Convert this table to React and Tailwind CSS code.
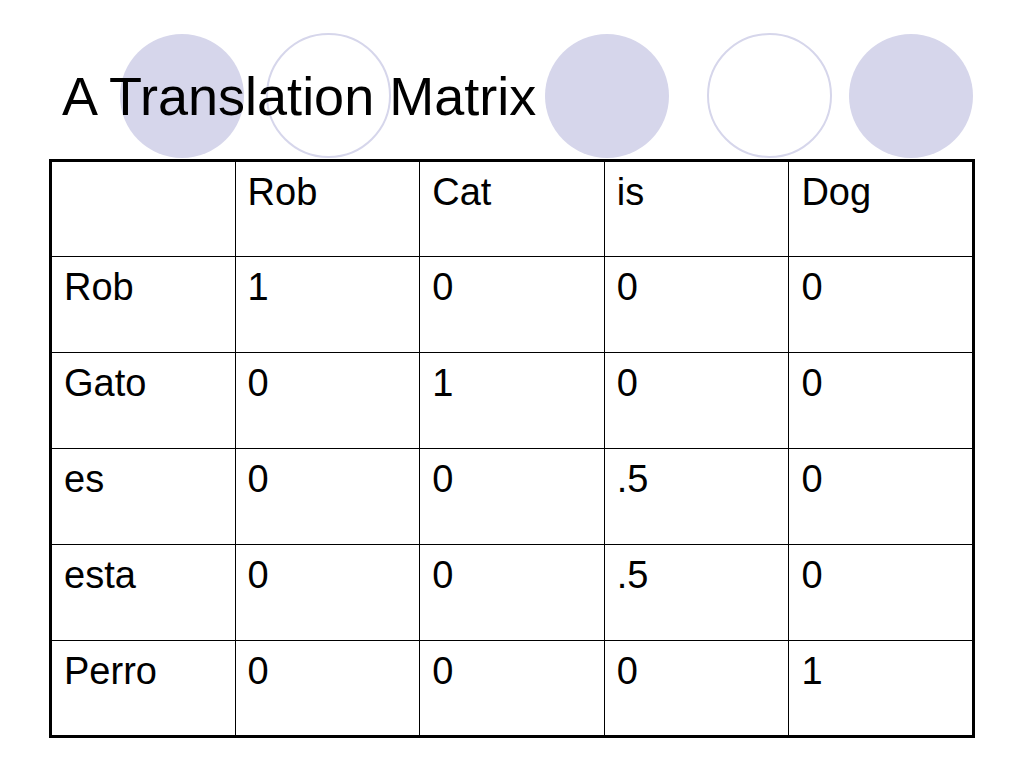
import React from "react";

const header = ["", "Rob", "Cat", "is", "Dog"];
const rows = [
  ["Rob", "1", "0", "0", "0"],
  ["Gato", "0", "1", "0", "0"],
  ["es", "0", "0", ".5", "0"],
  ["esta", "0", "0", ".5", "0"],
  ["Perro", "0", "0", "0", "1"],
];

function Filled({ className = "" }) {
  return <div className={"shrink-0 w-[124px] h-[124px] rounded-full bg-[#d6d6eb] " + className} />;
}
function Ring({ className = "" }) {
  return <div className={"shrink-0 w-[125px] h-[125px] -mt-px rounded-full border-[2.5px] border-[#d6d6eb] " + className} />;
}

export default function App() {
  return (
    <div className="w-[1024px] h-[768px] bg-white text-black overflow-hidden" style={{ fontFamily: '"Liberation Sans", Arial, sans-serif' }}>
      <div className="relative h-[159px]">
        <div className="flex items-start pt-[34px] pl-[120px]">
          <Filled />
          <Ring className="ml-[22px]" />
          <Filled className="ml-[154px]" />
          <Ring className="ml-[38px]" />
          <Filled className="ml-[17px]" />
        </div>
        <h1 className="absolute inset-x-0 top-0 pt-[66px] pl-[62px] text-[54px] leading-[60px] font-normal">A Translation Matrix</h1>
      </div>
      <div className="pl-[49px]">
        <table className="table-fixed border-collapse border-[3px] border-black w-[926px]">
          <tbody>
            {[header, ...rows].map((r, i) => (
              <tr key={i} className="h-[96px]">
                {r.map((c, j) => (
                  <td key={j} className="border border-black align-top pt-[8px] pl-[12px] text-[38px] leading-[44px]">
                    {c}
                  </td>
                ))}
              </tr>
            ))}
          </tbody>
        </table>
      </div>
    </div>
  );
}
